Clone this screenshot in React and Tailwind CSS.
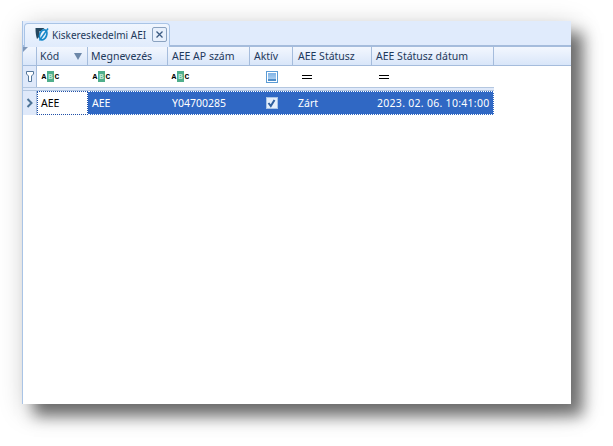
import React from "react";

const cols = [
  { t: "Kód", w: "w-[51px] pl-[3px]" },
  { t: "Megnevezés", w: "w-[80px] pl-[3px]" },
  { t: "AEE AP szám", w: "w-[82px] pl-[4px]" },
  { t: "Aktív", w: "w-[43px] pl-[4px]" },
  { t: "AEE Státusz", w: "w-[79px] pl-[5px]" },
  { t: "AEE Státusz dátum", w: "w-[122px] pl-[4px]" },
];

function Abc() {
  return (
    <span className="flex items-center gap-[1px] h-[11px] text-[8px] font-bold leading-none text-black font-['Liberation_Mono',monospace]">
      <span className="w-[4px] flex justify-center">A</span>
      <span className="w-[7px] h-[11px] bg-[#4fae8c] text-[#bfe6d6] text-center leading-[11px]">B</span>
      <span className="w-[4px] flex justify-center">C</span>
    </span>
  );
}

function Eq() {
  return <span className="block w-[10px] h-[4px] border-y border-black"></span>;
}

function Logo() {
  return (
    <svg width="15" height="15" viewBox="0 0 15 15" className="shrink-0">
      <path d="M0.5 1H9.5L6 4H4.5V9.5L2 12C1 9 0.5 6 0.5 1Z" fill="#24465e" />
      <ellipse cx="8.2" cy="7.8" rx="3.4" ry="5.2" transform="rotate(22 8.2 7.8)" fill="none" stroke="#1688c9" strokeWidth="1.8" />
      <path d="M4.5 13.5L13 1.5" stroke="#1688c9" strokeWidth="1.5" />
    </svg>
  );
}

function ChevronCell() {
  return (
    <svg width="7" height="10" viewBox="0 0 7 10">
      <path d="M1.5 1L5.5 5L1.5 9" fill="none" stroke="#4d7396" strokeWidth="2" />
    </svg>
  );
}

export default function App() {
  return (
    <div className="w-[613px] h-[446px] bg-white pt-[21px] pl-[22px] overflow-hidden font-['Noto_Sans','Liberation_Sans',sans-serif] text-[10.5px] leading-none">
      <div className="w-[549px] h-[383px] bg-white flex flex-col border-l border-[#a9c4e6] shadow-[12px_12px_14px_rgba(0,0,0,0.5),4px_6px_26px_rgba(0,0,0,0.22)]">
        {/* tab strip */}
        <div className="h-[26px] bg-[#e0ebfc] border-b-2 border-[#a5bcdc] flex items-end pl-[1px] shrink-0">
          <div className="w-[146px] h-[24px] -mb-[2px] pb-[2px] flex items-center pl-[10px] rounded-t-[4px] border border-b-0 border-[#a9c4e6] bg-gradient-to-b from-[#f0f6fe] to-[#e0ebfc]">
            <Logo />
            <span className="text-[#1e395b] text-[10px] w-[99px] pl-[2px] whitespace-nowrap">Kiskereskedelmi AEI</span>
            <span className="w-[15px] h-[15px] ml-[3px] rounded-[2px] border border-[#8aa2c0] bg-[#e8f0fc] flex items-center justify-center">
              <svg width="7" height="7" viewBox="0 0 7 7">
                <path d="M0.5 0.5L6.5 6.5M6.5 0.5L0.5 6.5" stroke="#3b5a82" strokeWidth="1.3" />
              </svg>
            </span>
          </div>
        </div>

        {/* header */}
        <div className="h-[19px] flex shrink-0 border-b border-[#a5bcdc] bg-gradient-to-b from-[#f3f7fe] to-[#d9e6f9]">
          <div className="w-[14px] border-r border-[#a5bcdc] shrink-0 relative">
            <span className="absolute left-0 top-0 w-0 h-0 border-t-[5px] border-r-[5px] border-t-[#7f97b8] border-r-transparent"></span>
          </div>
          {cols.map((c, i) => (
            <div key={c.t} className={`${c.w} shrink-0 border-r border-[#a5bcdc] flex items-center text-[#1e395b] whitespace-nowrap`}>
              {c.t}
              {i === 0 && (
                <svg width="8" height="7" viewBox="0 0 8 7" className="ml-[15px]">
                  <path d="M0 0H8L4 7Z" fill="#6c87a8" />
                </svg>
              )}
            </div>
          ))}
        </div>

        {/* filter row */}
        <div className="h-[21px] flex shrink-0 items-stretch">
          <div className="w-[14px] shrink-0 border-r border-[#a5bcdc] bg-[#dfe9fa] flex items-center justify-center">
            <svg width="8" height="11" viewBox="0 0 8 11">
              <path d="M0.5 0.5H7.5V3L5.5 5V10.5H2.5V5L0.5 3Z" fill="#fff" stroke="#54779b" />
            </svg>
          </div>
          <div className="w-[51px] flex items-center pl-[5px]"><Abc /></div>
          <div className="w-[80px] flex items-center pl-[5px]"><Abc /></div>
          <div className="w-[82px] flex items-center pl-[4px]"><Abc /></div>
          <div className="w-[43px] flex items-center justify-center">
            <span className="w-[12px] h-[12px] border border-[#5b9bd5] bg-white flex items-center justify-center">
              <span className="w-[8px] h-[8px] bg-gradient-to-b from-[#7fb3e6] to-[#a9cdf0] border-b-2 border-[#4d8cc8]"></span>
            </span>
          </div>
          <div className="w-[79px] flex items-center pl-[9px]"><Eq /></div>
          <div className="w-[122px] flex items-center pl-[7px]"><Eq /></div>
        </div>

        {/* separator */}
        <div className="h-[4px] w-[471px] shrink-0 border-y border-[#b4c7e0] bg-[#dfe9fa]"></div>

        {/* data row */}
        <div className="h-[24px] flex shrink-0 items-stretch">
          <div className="w-[14px] shrink-0 border-r border-[#a5bcdc] bg-[#dfe9fa] flex items-center justify-center">
            <ChevronCell />
          </div>
          <div className="w-[51px] bg-white border border-dotted border-[#1f4fa8] flex items-center pl-[3px] text-black">AEE</div>
          <div className="w-[406px] flex items-stretch bg-[#3068c4] border-y border-r border-dotted border-y-white border-r-white text-white">
            <div className="w-[80px] flex items-center pl-[4px]">AEE</div>
            <div className="w-[82px] flex items-center pl-[4px]">Y04700285</div>
            <div className="w-[43px] flex items-center justify-center">
              <span className="w-[12px] h-[12px] bg-[#e4eefb] border border-[#a9c4e6] flex items-center justify-center">
                <svg width="9" height="9" viewBox="0 0 9 9">
                  <path d="M1.5 4L3.8 7L7.5 1" fill="none" stroke="#2f5f9e" strokeWidth="2" />
                </svg>
              </span>
            </div>
            <div className="w-[79px] flex items-center pl-[5px]">Zárt</div>
            <div className="flex-1 flex items-center pl-[5px] whitespace-nowrap tracking-[0.28px]">2023. 02. 06. 10:41:00</div>
          </div>
        </div>
      </div>
    </div>
  );
}
